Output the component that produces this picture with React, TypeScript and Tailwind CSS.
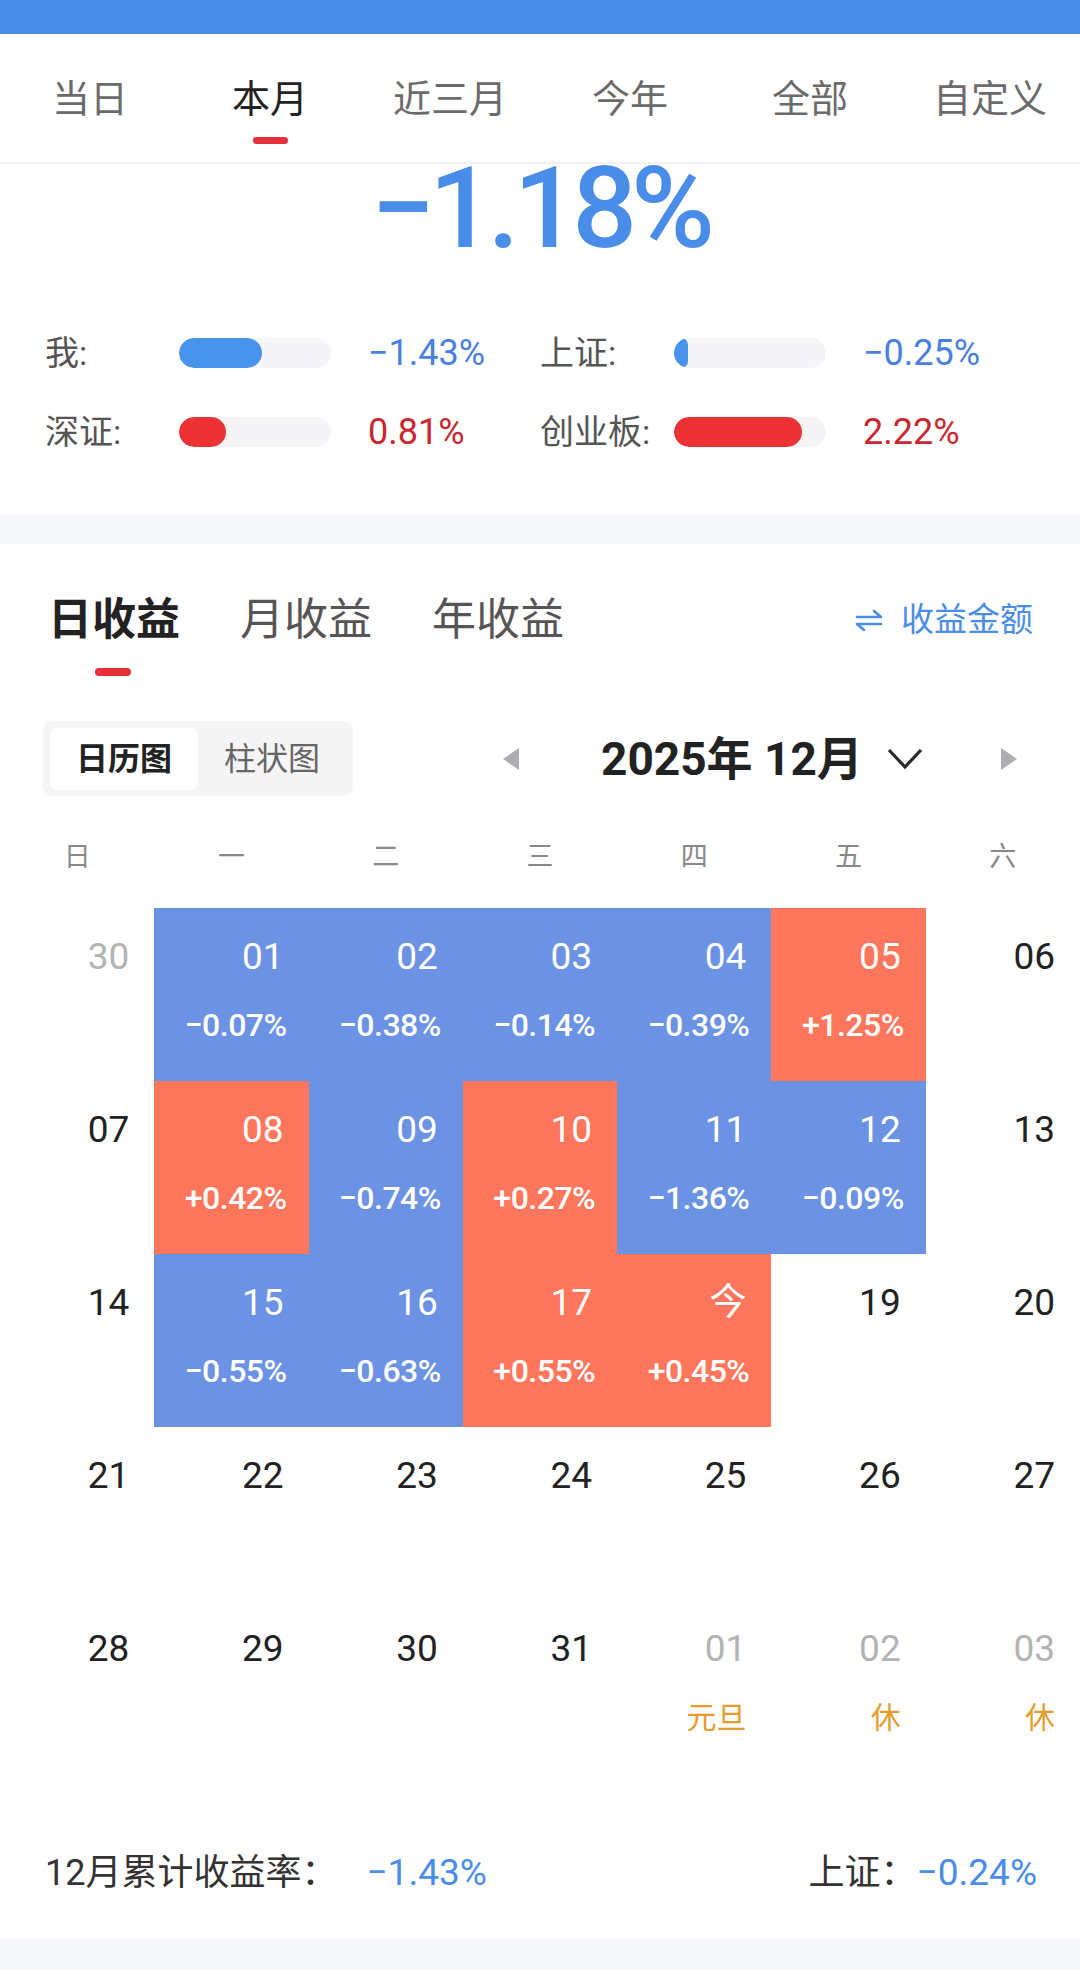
import React from "react";

type Cell = { d: string; p?: string; c?: "b" | "r"; g?: boolean; h?: string };

const rows: Cell[][] = [
  [
    { d: "30", g: true },
    { d: "01", p: "−0.07%", c: "b" },
    { d: "02", p: "−0.38%", c: "b" },
    { d: "03", p: "−0.14%", c: "b" },
    { d: "04", p: "−0.39%", c: "b" },
    { d: "05", p: "+1.25%", c: "r" },
    { d: "06" },
  ],
  [
    { d: "07" },
    { d: "08", p: "+0.42%", c: "r" },
    { d: "09", p: "−0.74%", c: "b" },
    { d: "10", p: "+0.27%", c: "r" },
    { d: "11", p: "−1.36%", c: "b" },
    { d: "12", p: "−0.09%", c: "b" },
    { d: "13" },
  ],
  [
    { d: "14" },
    { d: "15", p: "−0.55%", c: "b" },
    { d: "16", p: "−0.63%", c: "b" },
    { d: "17", p: "+0.55%", c: "r" },
    { d: "今", p: "+0.45%", c: "r" },
    { d: "19" },
    { d: "20" },
  ],
  [{ d: "21" }, { d: "22" }, { d: "23" }, { d: "24" }, { d: "25" }, { d: "26" }, { d: "27" }],
  [
    { d: "28" },
    { d: "29" },
    { d: "30" },
    { d: "31" },
    { d: "01", g: true, h: "元旦" },
    { d: "02", g: true, h: "休" },
    { d: "03", g: true, h: "休" },
  ],
];

function Bar({ w, color }: { w: number; color: "b" | "r" }) {
  return (
    <div className="w-[152px] h-[30px] rounded-full bg-[#f5f5f7] overflow-hidden">
      <div
        className={`h-full rounded-full ${color === "b" ? "bg-[#4894ec]" : "bg-[#ec3235]"}`}
        style={{ width: w }}
      />
    </div>
  );
}

function Stat({
  label,
  w,
  color,
  value,
}: {
  label: string;
  w: number;
  color: "b" | "r";
  value: string;
}) {
  return (
    <div className="flex items-center w-[496px]">
      <span className="w-[134px] text-[34px] text-[#555] leading-none">{label}</span>
      <Bar w={w} color={color} />
      <span
        className={`ml-[37px] text-[36px] leading-none ${
          color === "b" ? "text-[#4a80e2]" : "text-[#c9282e]"
        }`}
      >
        {value}
      </span>
    </div>
  );
}

function Harpoon() {
  return (
    <svg width="28" height="22" viewBox="0 0 28 22" fill="none" stroke="#4a8de8" strokeWidth="2.6" strokeLinecap="round" strokeLinejoin="round">
      <path d="M2 8 H26 L19 2" />
      <path d="M26 15 H2 L9 21" />
    </svg>
  );
}

export default function App() {
  const tabs = ["当日", "本月", "近三月", "今年", "全部", "自定义"];
  const weeks = ["日", "一", "二", "三", "四", "五", "六"];
  return (
    <div className="w-[1080px] min-h-[1970px] bg-white font-[Roboto,'Noto_Sans_CJK_SC',sans-serif] overflow-hidden">
      <div className="h-[34px] bg-[#4a8ce9]" />
      {/* Top tabs */}
      <div className="h-[128px] flex">
        {tabs.map((t, i) => (
          <div key={t} className="w-[180px] flex flex-col items-center pt-[46px]">
            <span
              className={`text-[38px] leading-[38px] ${i === 1 ? "text-[#222]" : "text-[#6b6b6b]"}`}
            >
              {t}
            </span>
            {i === 1 && <div className="mt-[19px] w-[35px] h-[7px] rounded-full bg-[#e5323a]" />}
          </div>
        ))}
      </div>
      <div className="h-[2px] bg-[#f1f1f3]" />

      {/* Big number */}
      <div className="mt-[4px] h-[80px] flex justify-center">
        <span className="text-[114px] leading-[80px] font-medium text-[#4a8de8] tracking-[-6px]">−1.18%</span>
      </div>

      {/* Stats */}
      <div className="px-[45px] mt-[77px]">
        <div className="flex items-center h-[56px]">
          <Stat label="我:" w={83} color="b" value="−1.43%" />
          <Stat label="上证:" w={14} color="b" value="−0.25%" />
        </div>
        <div className="flex items-center h-[56px] mt-[23px]">
          <Stat label="深证:" w={47} color="r" value="0.81%" />
          <Stat label="创业板:" w={128} color="r" value="2.22%" />
        </div>
      </div>

      <div className="mt-[55px] h-[29px] bg-[#f6f7fb]" />

      {/* Section tabs */}
      <div className="mt-[56px] px-[48px] pr-[47px] flex items-center justify-between h-[40px]">
        <div className="flex items-center gap-[60px]">
          <span className="text-[44px] leading-[40px] font-bold text-[#222]">日收益</span>
          <span className="text-[44px] leading-[40px] text-[#555]">月收益</span>
          <span className="text-[44px] leading-[40px] text-[#555]">年收益</span>
        </div>
        <div className="flex items-center gap-[18px] text-[#4a8de8]">
          <Harpoon />
          <span className="text-[33px] leading-[40px]">收益金额</span>
        </div>
      </div>
      <div className="mt-[28px] ml-[95px] w-[36px] h-[8px] rounded-full bg-[#e5323a]" />

      {/* Segmented + month nav */}
      <div className="mt-[45px] ml-[43px] flex items-center h-[75px]">
        <div className="w-[310px] h-[75px] rounded-[10px] bg-[#f5f5f5] flex items-center px-[7px]">
          <div className="w-[148px] h-[62px] rounded-[8px] bg-white flex items-center justify-center text-[32px] font-bold text-[#222]">
            日历图
          </div>
          <div className="w-[148px] h-[62px] flex items-center justify-center text-[32px] text-[#666]">
            柱状图
          </div>
        </div>
        <svg className="ml-[149px]" width="18" height="24" viewBox="0 0 18 24">
          <path d="M17 1 L1 12 L17 23 Z" fill="#adadb2" />
        </svg>
        <span className="ml-[81px] w-[286px] text-[46px] leading-none font-bold text-[#222] whitespace-nowrap">
          2025年 12月
        </span>
        <svg width="36" height="22" viewBox="0 0 36 22" fill="none">
          <path d="M2 2 L18 19 L34 2" stroke="#2a2a2a" strokeWidth="3.2" />
        </svg>
        <svg className="ml-[77px]" width="18" height="24" viewBox="0 0 18 24">
          <path d="M1 1 L17 12 L1 23 Z" fill="#adadb2" />
        </svg>
      </div>

      {/* Weekdays */}
      <div className="mt-[35px] grid grid-cols-7 h-[52px] items-center">
        {weeks.map((w) => (
          <div key={w} className="text-center text-[27px] text-[#888]">
            {w}
          </div>
        ))}
      </div>

      {/* Calendar */}
      <div className="mt-[25px]">
        {rows.map((r, ri) => (
          <div key={ri} className="grid grid-cols-7">
            {r.map((c, ci) => (
              <div
                key={ci}
                className={`h-[173px] flex flex-col items-end pr-[25px] pt-[30px] ${
                  c.c === "b" ? "bg-[#6c92e4]" : c.c === "r" ? "bg-[#fe765c]" : "bg-white"
                }`}
              >
                <span
                  className={`text-[37px] leading-[37px] ${
                    c.c ? "text-white" : c.g ? "text-[#b3b3b3]" : "text-[#222]"
                  }`}
                >
                  {c.d}
                </span>
                {c.p && (
                  <span className="mt-[34px] mr-[-3px] text-[32px] leading-[32px] font-medium text-white tracking-[-0.5px]">
                    {c.p}
                  </span>
                )}
                {c.h && (
                  <span className="mt-[36px] text-[30px] leading-[30px] text-[#e59c2c]">{c.h}</span>
                )}
              </div>
            ))}
          </div>
        ))}
      </div>

      {/* Footer */}
      <div className="mt-[80px] h-[40px] flex items-center justify-between pl-[45px] pr-[43px]">
        <div className="flex items-center">
          <span className="text-[36px] text-[#333]">12月累计收益率：</span>
          <span className="ml-[29px] text-[37px] text-[#4a8de8]">−1.43%</span>
        </div>
        <div className="flex items-center">
          <span className="text-[36px] text-[#333]">上证：</span>
          <span className="text-[37px] text-[#4a8de8]">−0.24%</span>
        </div>
      </div>
      <div className="mt-[46px] h-[32px] bg-[#f6f7fb]" />
    </div>
  );
}
